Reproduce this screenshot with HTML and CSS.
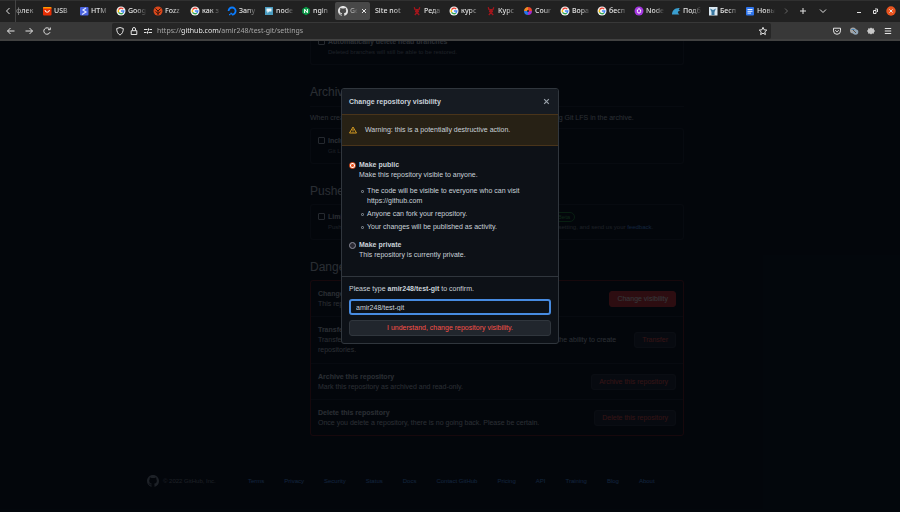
FILE: index.html
```html
<!DOCTYPE html>
<html lang="en">
<head>
<meta charset="utf-8">
<title>Settings · amir248/test-git</title>
<link rel="stylesheet" href="styles.css">
</head>
<body>
<svg class="defs" aria-hidden="true">
  <symbol id="google" viewBox="0 0 10 10"><circle cx="5" cy="5" r="4.500" fill="#f4f4f4"/><path d="M7.200 3.200A2.800 2.800 0 0 0 2.600 3.700" fill="none" stroke="#ea4335" stroke-width="1.300"/><path d="M2.600 3.700a2.800 2.800 0 0 0 0 2.700" fill="none" stroke="#fbbc05" stroke-width="1.300"/><path d="M2.600 6.400A2.800 2.800 0 0 0 6.900 7" fill="none" stroke="#34a853" stroke-width="1.300"/><path d="M5 5h2.800a2.800 2.800 0 0 1-.9 2" fill="none" stroke="#4285f4" stroke-width="1.300"/></symbol>
  <symbol id="github" viewBox="0 0 16 16"><path fill="currentColor" d="M8 0C3.58 0 0 3.58 0 8c0 3.54 2.29 6.53 5.47 7.59.4.07.55-.17.55-.38 0-.19-.01-.82-.01-1.49-2.01.37-2.53-.49-2.69-.94-.09-.23-.48-.94-.82-1.13-.28-.15-.68-.52-.01-.53.63-.01 1.08.58 1.23.82.72 1.21 1.87.87 2.33.66.07-.52.28-.87.51-1.07-1.78-.2-3.64-.89-3.64-3.95 0-.87.31-1.59.82-2.15-.08-.2-.36-1.02.08-2.12 0 0 .67-.21 2.2.82.64-.18 1.32-.27 2-.27s1.36.09 2 .27c1.53-1.04 2.2-.82 2.2-.82.44 1.1.16 1.92.08 2.12.51.56.82 1.27.82 2.15 0 3.07-1.87 3.75-3.65 3.95.29.25.54.73.54 1.48 0 1.07-.01 1.93-.01 2.2 0 .21.15.46.55.38A8.01 8.01 0 0 0 16 8c0-4.42-3.58-8-8-8z"/></symbol>
  <symbol id="lobster" viewBox="0 0 10 10"><path d="M2.200 1.200 3 3.500 5 4.500 7 3.500l.8-2.300M5 3v4.500M3 5.500h4M2.800 9 5 6.500 7.200 9" fill="none" stroke="#a3161c" stroke-width="1.300"/></symbol>
</svg>

<header class="browser">
  <nav class="tabs" aria-label="Tabs">
    <button class="scroll" aria-label="Scroll left"><svg class="icon" viewBox="0 0 10 10"><path d="M6.500 2 3.500 5l3 3" class="line"/></svg></button>
    <button class="tab tab-cut"><span>флек</span></button>
    <button class="tab"><svg class="icon" viewBox="0 0 10 10"><rect x="1" y="1" width="8.500" height="8.500" rx="1" fill="#e62e04"/><path d="M1 2.500V2a1 1 0 0 1 1-1h6.500a1 1 0 0 1 1 1v.5z" fill="#f90"/><path d="M3 4a2.200 2.200 0 0 0 4.400 0" fill="none" stroke="#fff"/></svg><span>USB</span></button>
    <button class="tab"><svg class="icon" viewBox="0 0 10 10"><rect x="1" y="1" width="8.500" height="8.500" rx="1" fill="#4a63e0"/><path d="M7 2 4 4l3 2-4 2.500" fill="none" stroke="#dfe5ff" stroke-width="1.200"/></svg><span>HTM</span></button>
    <button class="tab"><svg class="icon"><use href="#google"/></svg><span>Goog</span></button>
    <button class="tab"><svg class="icon" viewBox="0 0 10 10"><circle cx="5" cy="5" r="4.500" fill="#d9481c"/><path d="M2.500 2.500 5 5l2.500-2.500M5 5v4M2.500 5.500 5 7.500l2.500-2" fill="none" stroke="#3a1408"/></svg><span>Fozz</span></button>
    <button class="tab"><svg class="icon"><use href="#google"/></svg><span>как з</span></button>
    <button class="tab"><svg class="icon" viewBox="0 0 10 10"><path d="M5 8.500A3.500 3.500 0 1 0 1.600 5" fill="none" stroke="#0a7cff" stroke-width="1.800"/><path d="M3.300 6.800H5v1.700H3.300zM2 8h1.300v1.200H2z" fill="#0a7cff"/></svg><span>Запу</span></button>
    <button class="tab"><svg class="icon" viewBox="0 0 10 10"><rect x="1" y="1" width="8" height="8" fill="#4a9cc0"/><path d="M2.500 2.500h5v3H5L3.500 7.500V5.500h-1z" fill="#e8f6fc"/></svg><span>node</span></button>
    <button class="tab"><svg class="icon" viewBox="0 0 10 10"><path d="M5 .8 8.800 3v4L5 9.200 1.200 7V3z" fill="#0a9b48"/><path d="M3.600 7V3.200L6.400 6.800V3" fill="none" stroke="#fff"/></svg><span>ngin</span></button>
    <button class="tab tab-active"><svg class="icon"><use href="#github"/></svg><span>Ge</span><svg class="tab-x" viewBox="0 0 6 6"><path d="m1 1 4 4M5 1 1 5" class="line"/></svg></button>
    <button class="tab tab-plain"><span>Site not</span></button>
    <button class="tab"><svg class="icon"><use href="#lobster"/></svg><span>Реда</span></button>
    <button class="tab"><svg class="icon"><use href="#google"/></svg><span>курс</span></button>
    <button class="tab"><svg class="icon"><use href="#lobster"/></svg><span>Курс</span></button>
    <button class="tab"><svg class="icon" viewBox="0 0 10 10"><path d="M5 2.500A2.500 2.500 0 0 1 7.500 5" fill="none" stroke="#e8432e" stroke-width="3"/><path d="M7.500 5A2.500 2.500 0 0 1 5 7.500" fill="none" stroke="#a52cc9" stroke-width="3"/><path d="M5 7.500A2.500 2.500 0 0 1 2.500 5" fill="none" stroke="#2673e8" stroke-width="3"/><path d="M2.500 5A2.500 2.500 0 0 1 5 2.500" fill="none" stroke="#f08a24" stroke-width="3"/></svg><span>Cour</span></button>
    <button class="tab"><svg class="icon"><use href="#google"/></svg><span>Вора</span></button>
    <button class="tab"><svg class="icon"><use href="#google"/></svg><span>бесп</span></button>
    <button class="tab"><svg class="icon" viewBox="0 0 10 10"><circle cx="5" cy="5" r="4.500" fill="#a436e0"/><path d="M3.400 3.500v2a1.600 1.600 0 0 0 3.200 0v-2M5 2v2" fill="none" stroke="#fff"/></svg><span>Node</span></button>
    <button class="tab"><svg class="icon" viewBox="0 0 10 10"><path d="M1 8.500C1 4.500 4 1.500 9 2 7.500 3 7 4 9.500 5 6.500 5 6 6.500 8.500 8.500z" fill="#3a9fd0"/></svg><span>Подб</span></button>
    <button class="tab"><svg class="icon" viewBox="0 0 10 10"><rect x="1" y="1" width="8.500" height="8.500" fill="#dbe9f2"/><path d="M2 2.500 5 4l3-1.500L6.500 6v3h-3V6z" fill="#3b78a0"/></svg><span>Бесп</span></button>
    <button class="tab"><svg class="icon" viewBox="0 0 10 10"><rect x="1" y="1" width="8" height="8.500" rx="1" fill="#2f76ee"/><path d="M2.500 3.500h5M2.500 5.300h5M2.500 7.100h3.500" stroke="#fff" stroke-width=".9"/></svg><span>Новы</span></button>
    <button class="scroll scroll-off" aria-label="Scroll right"><svg class="icon" viewBox="0 0 10 10"><path d="m4 2.500 2.500 2.500L4 7.500" class="line"/></svg></button>
    <button class="scroll" aria-label="New tab"><svg class="icon" viewBox="0 0 10 10"><path d="M5 2v6M2 5h6" class="line"/></svg></button>
    <button class="scroll" aria-label="List tabs"><svg class="icon" viewBox="0 0 10 10"><path d="m2 3.500 3 3 3-3" class="line"/></svg></button>
    <div class="window-buttons">
      <button aria-label="Minimize"><svg class="icon" viewBox="0 0 10 10"><path d="M3 6.500h4" class="line"/></svg></button>
      <button aria-label="Restore"><svg class="icon" viewBox="0 0 10 10"><path d="M3.500 4.500H6v3H3.500zM5 3h2.500v3" class="line"/></svg></button>
      <button aria-label="Close"><svg class="icon" viewBox="0 0 10 10"><circle cx="5" cy="5" r="4.700" fill="#e9541f"/><path d="m3.400 3.400 3.200 3.200M6.600 3.400 3.400 6.600" class="line"/></svg></button>
    </div>
  </nav>
  <div class="toolbar">
    <div class="nav-buttons">
      <button aria-label="Back"><svg class="icon" viewBox="0 0 10 10"><path d="M8.500 5h-7M4.500 2l-3 3 3 3" class="line"/></svg></button>
      <button aria-label="Forward"><svg class="icon" viewBox="0 0 10 10"><path d="M1.500 5h7M5.500 2l3 3-3 3" class="line"/></svg></button>
      <button aria-label="Reload"><svg class="icon" viewBox="0 0 10 10"><path d="M8 6.200A3.200 3.200 0 1 1 7.500 3M8.300 1.500v2.200H6" class="line"/></svg></button>
    </div>
    <div class="address">
      <svg class="icon" viewBox="0 0 10 10"><path d="M5 1.500 8.300 2.500C8.300 6 7 8 5 9 3 8 1.700 6 1.700 2.500z" class="line"/></svg>
      <svg class="icon" viewBox="0 0 10 10"><path d="M2.200 4.700h5.600v3.800H2.200zM3.500 4.500V3a1.500 1.500 0 0 1 3 0v1.500" class="line"/></svg>
      <svg class="icon" viewBox="0 0 10 10"><path d="M1 3.500h3.500M6.500 3.500H9M1 6.500h2.500M5.500 6.500H9M5.500 2.300v2.400M4.500 5.300v2.400" class="line"/></svg>
      <input class="url" aria-label="Address" value="https://github.com/amir248/test-git/settings">
      <button aria-label="Bookmark"><svg class="icon" viewBox="0 0 10 10"><path d="m5 1.300 1.100 2.500 2.700.3-2 1.800.6 2.700L5 7.200 2.600 8.600l.6-2.700-2-1.800 2.700-.3z" class="line"/></svg></button>
    </div>
    <div class="tools">
      <button aria-label="Pocket"><svg class="icon" viewBox="0 0 10 10"><path d="M1.500 2.200h7v2.600a3.500 3.500 0 0 1-7 0zM3.300 4.200 5 5.900l1.700-1.700" class="line"/></svg></button>
      <button aria-label="Translate"><svg class="icon" viewBox="0 0 10 10"><circle cx="4" cy="4.500" r="3" fill="#a5a5a5"/><circle cx="6.500" cy="6" r="2.800" fill="#8fa3b5"/><path d="m4 4 3 3" stroke="#5c4a3a"/><path d="M2.500 3.500h3" stroke="#3f7fb5"/></svg></button>
      <button aria-label="Extension"><svg class="icon" viewBox="0 0 10 10"><path d="m5 1.500 1.200.9 1.500-.1.300 1.500L9 5 8 6.200l-.3 1.500-1.500-.1L5 8.500l-1.200-.9-1.500.1L2 6.200 1 5l1-1.200.3-1.500 1.500.1z" fill="#c8c8c8"/></svg></button>
      <button aria-label="Menu"><svg class="icon" viewBox="0 0 10 10"><path d="M1.800 2.500h6.400M1.800 5h6.400M1.800 7.500h6.400" class="line"/></svg></button>
    </div>
  </div>
</header>

<div class="viewport">
  <div class="page">
    <main class="settings">
      <section class="card card-first">
        <input type="checkbox" id="heads"><div><label for="heads">Automatically delete head branches</label><p>Deleted branches will still be able to be restored.</p></div>
      </section>
      <h2 class="ruled">Archives</h2>
      <p class="intro">When creating source code archives, you can choose to include files stored using Git LFS in the archive.</p>
      <section class="card">
        <input type="checkbox" id="lfs"><div><label for="lfs">Include Git LFS objects in archives</label><p>Git LFS usage in archives is billed at the same rate as usage with the client.</p></div>
      </section>
      <h2>Pushes</h2>
      <section class="card">
        <input type="checkbox" id="pushes"><div class="grow"><div class="split"><label for="pushes">Limit how many branches and tags can be updated in a single push</label><span class="beta">Beta</span></div><p>Pushes will be rejected if they attempt to update more than this. Learn more about this setting, and send us your <a href="#">feedback</a>.</p></div>
      </section>
      <h2>Danger Zone</h2>
      <section class="danger">
        <div class="row"><div><strong>Change repository visibility</strong><p>This repository is currently private.</p></div><button class="btn btn-red">Change visibility</button></div>
        <div class="row"><div><strong>Transfer ownership</strong><p>Transfer this repository to another user or to an organization where you have the ability to create repositories.</p></div><button class="btn">Transfer</button></div>
        <div class="row"><div><strong>Archive this repository</strong><p>Mark this repository as archived and read-only.</p></div><button class="btn">Archive this repository</button></div>
        <div class="row"><div><strong>Delete this repository</strong><p>Once you delete a repository, there is no going back. Please be certain.</p></div><button class="btn">Delete this repository</button></div>
      </section>
    </main>
    <footer class="footer">
      <svg class="mark"><use href="#github"/></svg>
      <span class="copyright">© 2022 GitHub, Inc.</span>
      <nav class="links" aria-label="Footer"><a href="#">Terms</a><a href="#">Privacy</a><a href="#">Security</a><a href="#">Status</a><a href="#">Docs</a><a href="#">Contact GitHub</a><a href="#">Pricing</a><a href="#">API</a><a href="#">Training</a><a href="#">Blog</a><a href="#">About</a></nav>
    </footer>
  </div>

  <div class="backdrop">
    <form class="dialog" role="dialog" aria-labelledby="dialog-title">
      <div class="dialog-head"><h3 id="dialog-title">Change repository visibility</h3><button type="button" class="close" aria-label="Close dialog"><svg viewBox="0 0 6 6"><path d="m1 1 4 4M5 1 1 5" class="line"/></svg></button></div>
      <div class="warning"><svg viewBox="0 0 16 16"><path d="M8 2 15 14H1z" fill="none" stroke="#d29922" stroke-width="2" stroke-linejoin="round"/><path d="M8 6v4M8 11v2" stroke="#d29922" stroke-width="2"/></svg><span>Warning: this is a potentially destructive action.</span></div>
      <div class="options">
        <div class="option">
          <input type="radio" name="visibility" id="public" checked>
          <div><label for="public">Make public</label><p>Make this repository visible to anyone.</p>
            <ul><li>The code will be visible to everyone who can visit https://github.com</li><li>Anyone can fork your repository.</li><li>Your changes will be published as activity.</li></ul>
          </div>
        </div>
        <div class="option">
          <input type="radio" name="visibility" id="private">
          <div><label for="private">Make private</label><p>This repository is currently private.</p></div>
        </div>
      </div>
      <div class="confirm">
        <label for="confirm">Please type <strong>amir248/test-git</strong> to confirm.</label>
        <input type="text" id="confirm" value="amir248/test-git">
        <button type="button" class="submit">I understand, change repository visibility.</button>
      </div>
    </form>
  </div>
</div>
</body>
</html>
```
FILE: styles.css
```css
*, *::before { box-sizing: border-box; }
body { margin: 0; height: 100vh; overflow: hidden; display: flex; flex-direction: column; background: #0d1117; color: #c9d1d9; font: 7px/10px "Liberation Sans", Arial, sans-serif; }
p, h2, h3, ul { margin: 0; padding: 0; }
button, input { font: inherit; color: inherit; margin: 0; }
button { padding: 0; border: 0; background: none; }
a { color: #58a6ff; text-decoration: none; }
.defs { position: absolute; width: 0; height: 0; }
.icon { width: 10px; height: 10px; flex: none; display: block; }
.line { fill: none; stroke: currentColor; stroke-width: 1; }

.browser { font-family: "Noto Sans", "Open Sans", sans-serif; color: #e4e4e4; background: #222; }
.tabs { display: flex; align-items: center; height: 22px; padding-right: 4px; background: linear-gradient(#303030 1px, #212121 1px); }
.scroll { width: 20px; display: flex; justify-content: center; flex: none; }
.scroll:first-child { width: 16px; border-right: 1px solid #444; height: 22px; align-items: center; }
.scroll-off { width: 14px; color: #666; }
.tab { flex: 0 1 37px; min-width: 0; height: 18px; padding: 0 0 0 3px; display: flex; align-items: center; gap: 2px; white-space: nowrap; }
.tab span { flex: 1; min-width: 0; text-align: left; font-weight: 500; mask-image: linear-gradient(90deg, #000 35%, transparent 85%); }
.tab-cut { flex-basis: 23px; padding: 0; }
.tab-cut span { mask-image: linear-gradient(90deg, #0006, #000 40%, transparent); }
.tab-active { flex-basis: 35px; margin-right: 2px; padding-right: 3px; background: #484848; border-radius: 2px; }
.tab-active span { color: #aaa; }
.tab-x { width: 6px; height: 6px; flex: none; }
.tab-plain span { mask-image: linear-gradient(90deg, #000 50%, transparent); }
.window-buttons { display: flex; gap: 6px; margin-left: auto; }
.toolbar { display: flex; align-items: center; height: 19px; background: #383838; border-bottom: 2px solid #414141; }
.nav-buttons { display: flex; gap: 8px; width: 112px; padding-left: 6px; }
.address { flex: 1; height: 16px; display: flex; align-items: center; gap: 4px; padding: 0 3px; background: #262626; border-radius: 2px; }
.url { flex: 1; min-width: 0; padding: 0; border: 0; outline: 0; color: transparent; background: linear-gradient(90deg, #b0b0b0 24px, #fff 24px 63px, #b0b0b0 63px); background-clip: text; }
.tools { display: flex; gap: 7px; padding: 0 7px 0 61px; }

.viewport { flex: 1; min-height: 0; position: relative; overflow: hidden; }
.page { margin-top: -4px; padding-right: 6px; }
.settings { max-width: 474px; margin: 0 auto; padding-left: 100px; }
.card { display: flex; gap: 3px; padding: 7px; border: 1px solid #21262d; border-radius: 3px; }
.card-first { border-top: 0; padding-top: 0; }
.card label, .row strong { font-weight: 700; }
.card p { font-size: 6px; color: #8b949e; white-space: nowrap; }
.grow { flex: 1; min-width: 0; }
.card input { appearance: none; width: 7px; height: 7px; margin: 1px 0 0; border: 1px solid #b4bcc6; border-radius: 1px; flex: none; }
.settings h2 { font-size: 12px; line-height: 14px; font-weight: 400; margin: 20px 0 6px; }
.settings .ruled { padding-bottom: 7px; border-bottom: 1px solid #21262d; }
.intro { margin-bottom: 5px; white-space: nowrap; }
.split { display: flex; white-space: nowrap; }
.beta { padding: 0 4px; border: 1px solid #238636; border-radius: 5px; color: #3fb950; font-size: 6px; line-height: 8px; }
.danger { border: 1px solid #6e1a1c; border-radius: 3px; }
.row { display: flex; align-items: center; justify-content: space-between; gap: 8px; padding: 8px 7px 7px; }
.row + .row { border-top: 1px solid #21262d; }
.row:nth-child(2) { padding-bottom: 8px; }
.btn { flex: none; height: 16px; padding: 0 7px; border: 1px solid #30363d; border-radius: 3px; background: #21262d; color: #f85149; }
.btn-red { background: #da3633; border-color: #da3633; color: #fff; }
.footer { display: flex; align-items: center; padding: 39px 0 0 147px; font-size: 6px; color: #8b949e; }
.mark { width: 12px; height: 12px; }
.copyright { width: 89px; padding-left: 4px; }
.links { display: flex; gap: 20px; white-space: nowrap; }

.backdrop { position: absolute; inset: 0; display: flex; justify-content: center; align-items: flex-start; padding-top: 47px; background: rgba(1, 4, 9, .8); }
.dialog { width: 218px; background: #0d1117; border: 1px solid #30363d; border-radius: 3px; overflow: hidden; }
.dialog-head { display: flex; align-items: center; justify-content: space-between; height: 25px; padding: 0 8px 0 7px; background: #161b22; }
.dialog h3 { font-size: 7px; }
.close { color: #9aa2ab; }
.close svg { display: block; width: 7px; height: 7px; }
.warning { display: flex; align-items: center; gap: 8px; height: 32px; padding: 0 7px; background: #272115; border: solid #49341a; border-width: 1px 0; }
.warning svg { width: 8px; height: 8px; }
.options { padding: 14px 7px 16px; display: grid; gap: 8px; }
.option { display: flex; gap: 3px; }
.option label { font-weight: 700; }
.option input { appearance: none; width: 7px; height: 7px; margin: 2px 0 0; flex: none; border: 1px solid #8f8f9d; border-radius: 50%; background: #2b2a33; }
.option input:checked { border-color: #e9541f; background: radial-gradient(circle, #e9541f 1px, #fff 2px); }
.option ul { margin-top: 6px; padding-left: 8px; list-style: none; display: grid; gap: 3px; }
.option li { position: relative; }
.option li::before { content: ""; position: absolute; left: -6px; top: 4px; width: 3px; height: 3px; border: 1px solid #6d747c; border-radius: 1px; }
.confirm { display: flex; flex-direction: column; padding: 7px; border-top: 1px solid #30363d; }
.confirm input { margin: 5px 0; height: 16px; padding: 0 5px; background: #0d1117; border: 2px solid #478be0; border-radius: 3px; outline: 0; }
.submit { height: 16px; border: 1px solid #30363d; border-radius: 3px; background: #21262d; color: #f85149; }
```
